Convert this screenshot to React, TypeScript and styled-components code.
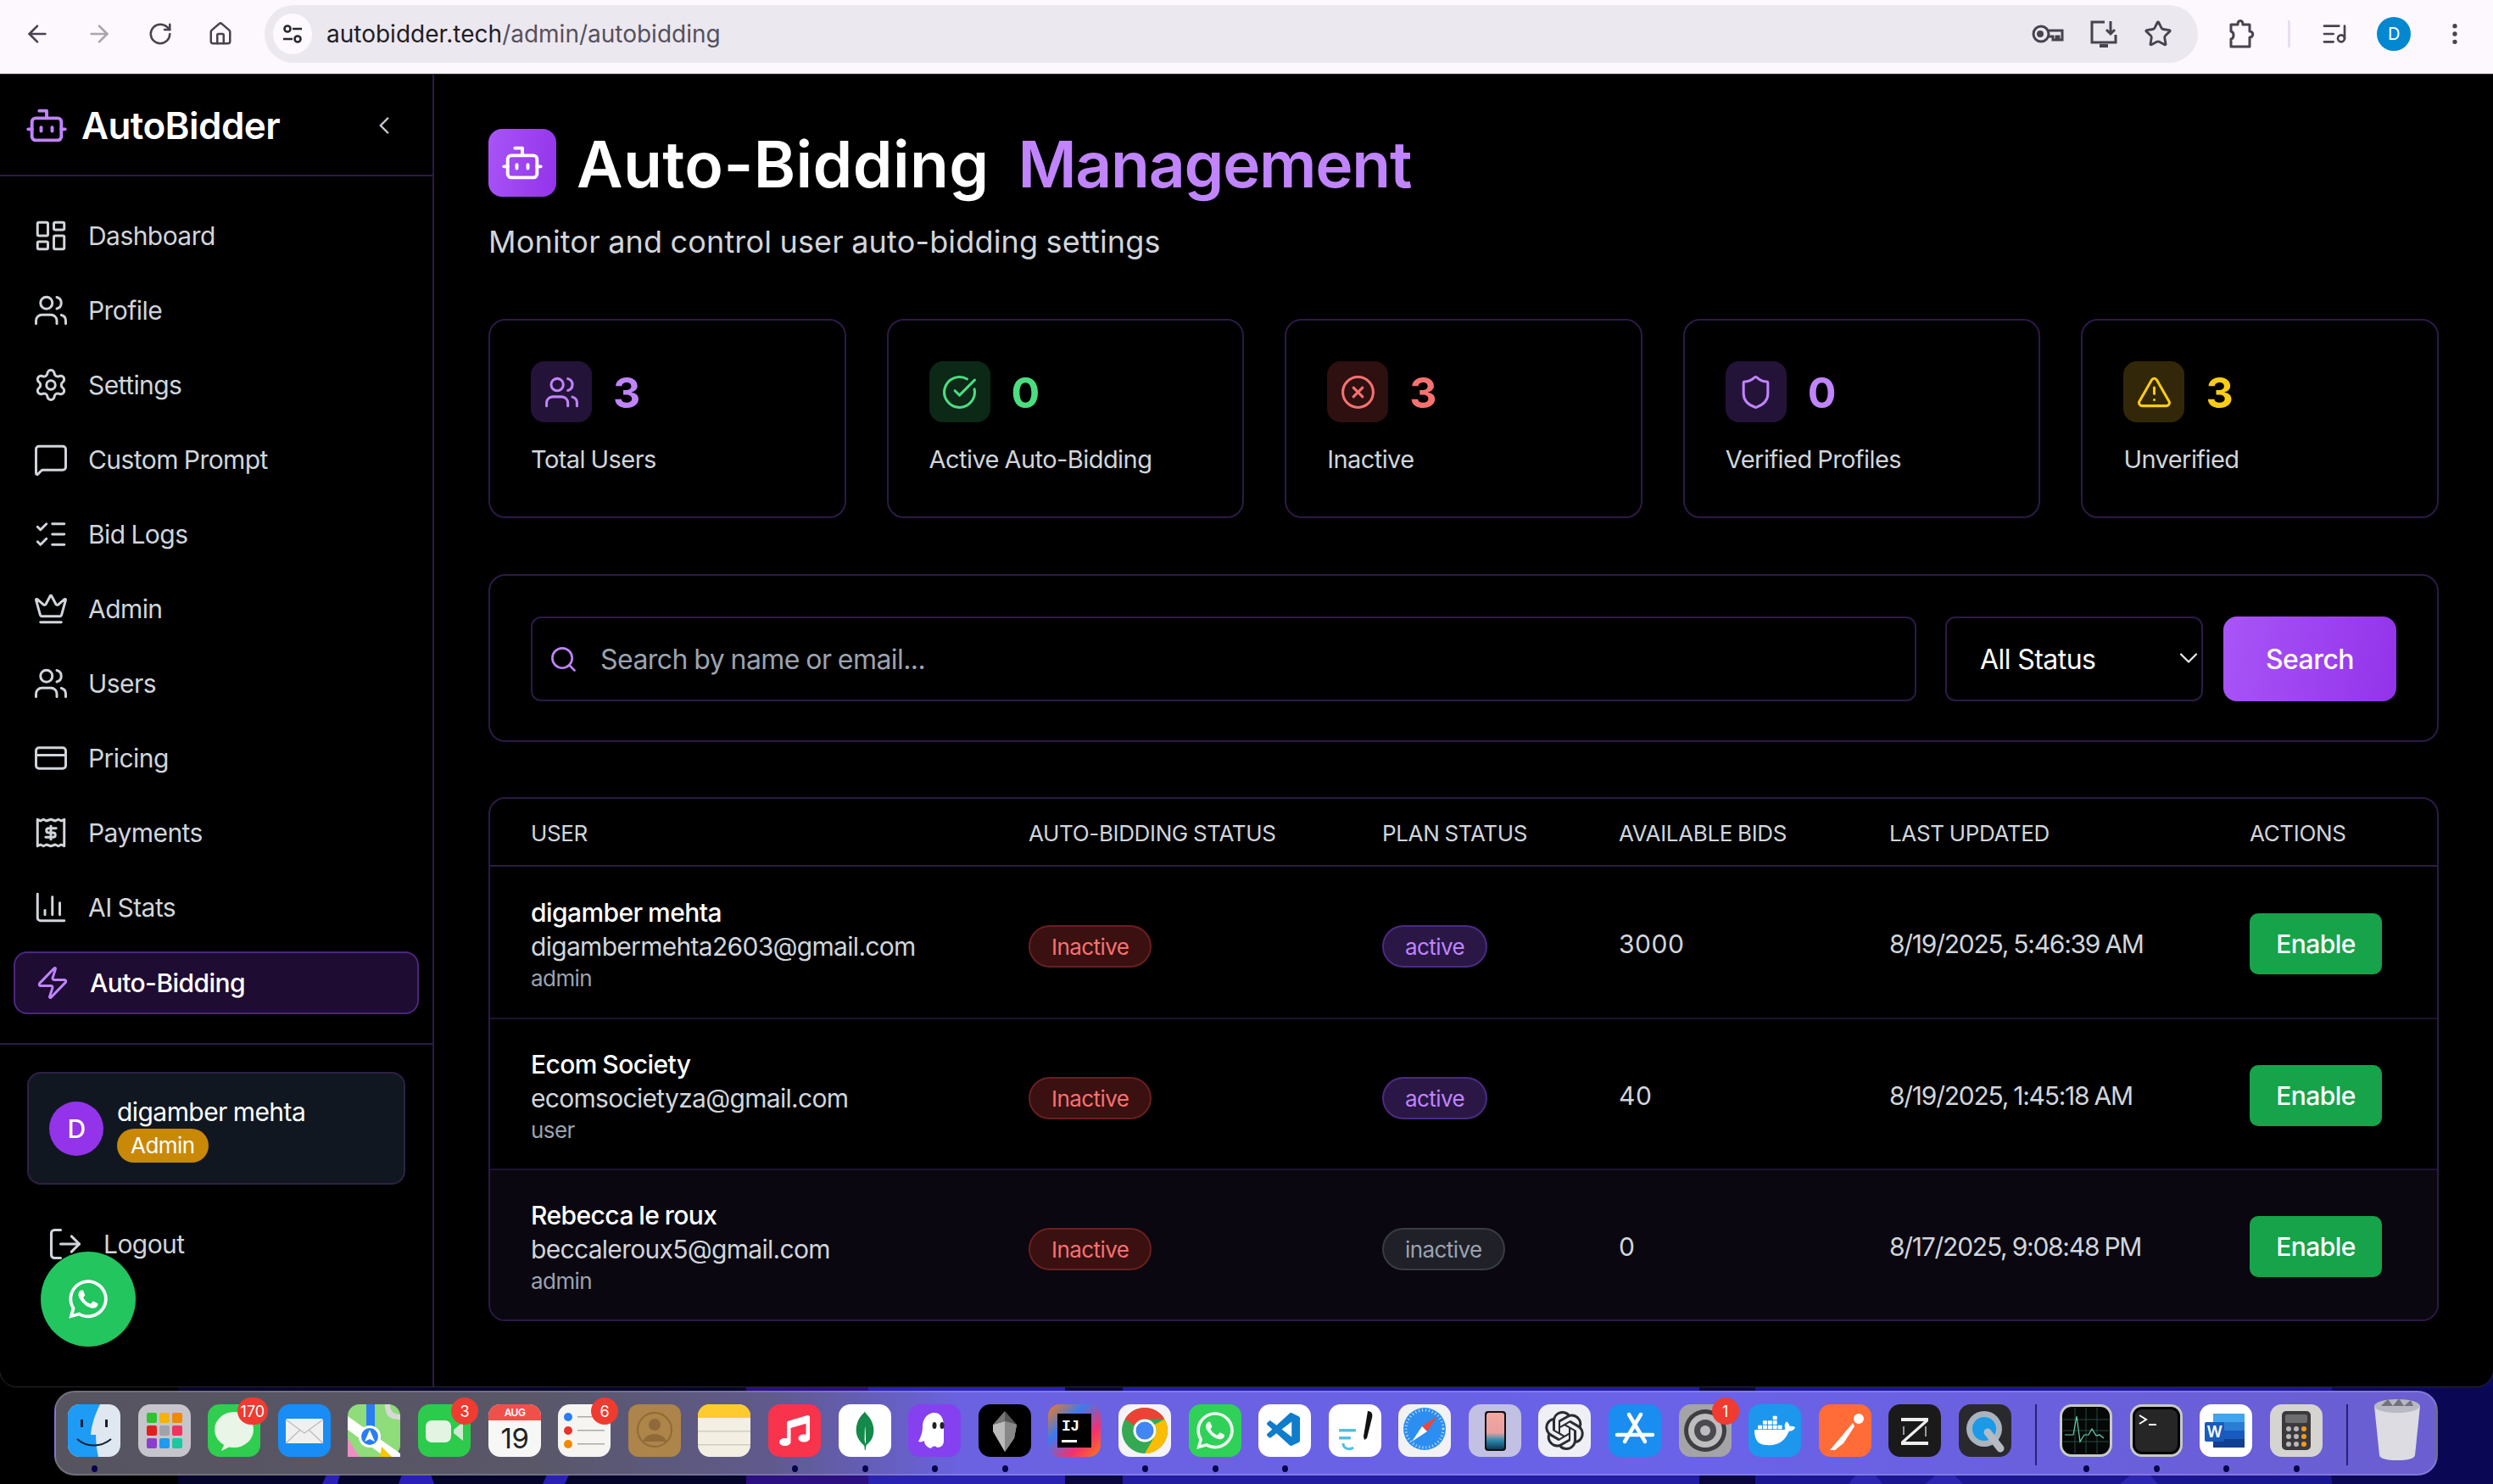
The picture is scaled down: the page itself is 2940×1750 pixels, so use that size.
import styled, { createGlobalStyle } from "styled-components";
import type { ReactNode } from "react";
import {
  ArrowLeft,
  ArrowRight,
  RotateCw,
  Home,
  Star,
  ListMusic,
  MoreVertical,
  Bot,
  ChevronLeft,
  ChevronDown,
  LayoutDashboard,
  Users,
  Settings,
  MessageSquare,
  ListChecks,
  Crown,
  CreditCard,
  ChartColumn,
  Zap,
  LogOut,
  CircleCheckBig,
  CircleX,
  Shield,
  TriangleAlert,
  Search as SearchIcon,
} from "lucide-react";
import { FaWhatsapp, FaMusic } from "react-icons/fa";
import { SiMongodb, SiOpenai, SiDocker } from "react-icons/si";
import { VscVscode } from "react-icons/vsc";

const GlobalStyle = createGlobalStyle`
  html, body {
    margin: 0;
    padding: 0;
    background: #000;
  }
  body {
    font-family: Inter, "Liberation Sans", sans-serif;
    letter-spacing: -0.56px;
    word-spacing: -1px;
  }
  * { box-sizing: border-box; }
`;

const Page = styled.div`
  position: relative;
  width: 2940px;
  height: 1750px;
  overflow: hidden;
  display: flex;
  flex-direction: column;
  background: linear-gradient(
    90deg,
    #000 0,
    #000 210px,
    #05052c 210px,
    #05052c 880px,
    #2c0f80 880px,
    #2c0f80 1024px,
    #2a22b0 1024px,
    #2a22b0 1256px,
    #0a0640 1256px,
    #0a0640 1324px,
    #221ca0 1324px,
    #221ca0 2004px,
    #0a0640 2004px,
    #0a0640 2070px,
    #1a1690 2070px,
    #1a1690 2750px,
    #0c0860 2750px
  );
`;

const Wallpaper = styled.svg`
  position: absolute;
  left: 0;
  bottom: 0;
  width: 2940px;
  height: 115px;
`;

const BrowserBar = styled.header`
  position: relative;
  height: 88px;
  flex: none;
  display: flex;
  align-items: center;
  background: #fdf7fe;
  border-bottom: 2px solid #e9e3ed;
  padding: 0 22px 6px 28px;
  color: #47434f;
`;

const NavButtons = styled.div`
  display: flex;
  align-items: center;
  gap: 41px;
  margin-right: 37px;
`;

const ToolGlyph = styled.span<{ $faded?: boolean }>`
  display: flex;
  color: ${(p) => (p.$faded ? "#a9a5ae" : "#47434f")};
`;

const UrlPill = styled.div`
  width: 2280px;
  height: 68px;
  border-radius: 34px;
  background: #ece8f0;
  display: flex;
  align-items: center;
  padding-left: 10px;
  padding-right: 30px;
`;

const TuneBadge = styled.span`
  width: 46px;
  height: 48px;
  border-radius: 50%;
  background: #fdf9ff;
  display: flex;
  align-items: center;
  justify-content: center;
  color: #2a2730;
`;

const UrlText = styled.div`
  margin-left: 17px;
  font-size: 28px;
  letter-spacing: 0;
  word-spacing: 0;
  color: #55515c;
  flex: 1;
`;

const UrlHost = styled.span`
  color: #1f1d24;
`;

const PillActions = styled.div`
  display: flex;
  align-items: center;
  gap: 30px;
`;

const BarActions = styled.div`
  display: flex;
  align-items: center;
  margin-left: 36px;
  flex: 1;
`;

const BarDivider = styled.span`
  width: 3px;
  height: 32px;
  background: #e6dff0;
  margin: 0 36px 0 38px;
`;

const ProfileDot = styled.span`
  width: 40px;
  height: 40px;
  border-radius: 50%;
  background: #0288d1;
  color: #fff;
  font-size: 20px;
  display: flex;
  align-items: center;
  justify-content: center;
  margin-left: 34px;
  margin-right: 36px;
`;

const AppWindow = styled.div`
  position: relative;
  height: 1547px;
  flex: none;
  display: flex;
  background: #000;
  border-radius: 0 0 20px 20px;
  box-shadow: 0 0 0 1px #26262c;
`;

const Sidebar = styled.aside`
  width: 512px;
  flex: none;
  border-right: 2px solid #2c1a47;
  display: flex;
  flex-direction: column;
`;

const SidebarHead = styled.div`
  height: 120px;
  flex: none;
  display: flex;
  align-items: center;
  padding: 2px 0 0 29px;
  border-bottom: 2px solid #2c1a47;
  color: #c084fc;
`;

const Brand = styled.div`
  margin-left: 15px;
  font-size: 44px;
  font-weight: 600;
  color: #fff;
  flex: 1;
`;

const Collapse = styled.span`
  display: flex;
  color: #c8cbd2;
  margin-right: 40px;
`;

const Nav = styled.nav`
  display: flex;
  flex-direction: column;
  gap: 16px;
  padding: 34px 16px 34px 16px;
  border-bottom: 2px solid #2c1a47;
`;

const NavItem = styled.a<{ $active?: boolean }>`
  height: ${(p) => (p.$active ? "74px" : "72px")};
  display: flex;
  align-items: center;
  gap: 23px;
  padding-left: 23px;
  border-radius: 16px;
  font-size: 30px;
  color: ${(p) => (p.$active ? "#fff" : "#d1d5db")};
  font-weight: ${(p) => (p.$active ? 500 : 400)};
  background: ${(p) => (p.$active ? "#1e0c33" : "transparent")};
  border: ${(p) => (p.$active ? "2px solid #4c2680" : "none")};
  svg {
    color: ${(p) => (p.$active ? "#c084fc" : "#d1d5db")};
  }
`;

const UserCard = styled.div`
  height: 133px;
  margin: 32px 32px 0 32px;
  background: #111720;
  border: 2px solid #2e2146;
  border-radius: 16px;
  display: flex;
  align-items: center;
  padding-left: 24px;
  gap: 16px;
`;

const Avatar = styled.div`
  width: 64px;
  height: 64px;
  border-radius: 50%;
  background: #9333ea;
  color: #fff;
  font-size: 30px;
  font-weight: 500;
  display: flex;
  align-items: center;
  justify-content: center;
`;

const UserName = styled.div`
  font-size: 30px;
  font-weight: 400;
  color: #fff;
  line-height: 40px;
`;

const RolePill = styled.span`
  display: inline-flex;
  align-items: center;
  height: 40px;
  padding: 0 16px;
  border-radius: 20px;
  background: #c98906;
  color: #fff;
  font-size: 26px;
`;

const LogoutRow = styled.a`
  display: flex;
  align-items: center;
  gap: 23px;
  margin-top: 48px;
  padding-left: 55px;
  height: 44px;
  font-size: 30px;
  color: #d1d5db;
`;

const WhatsappFab = styled.div`
  position: absolute;
  left: 48px;
  top: 1476px;
  width: 112px;
  height: 112px;
  border-radius: 50%;
  background: #22c55e;
  color: #fff;
  display: flex;
  align-items: center;
  justify-content: center;
`;

const Main = styled.main`
  flex: 1;
  padding: 64px 64px 0;
  min-width: 0;
`;

const TitleRow = styled.div`
  display: flex;
  align-items: center;
  height: 80px;
`;

const TitleIcon = styled.div`
  width: 80px;
  height: 80px;
  border-radius: 16px;
  background: linear-gradient(100deg, #a855f7, #9333ea);
  color: #fff;
  display: flex;
  align-items: center;
  justify-content: center;
  margin-right: 24px;
`;

const Title = styled.h1`
  margin: 4px 0 0;
  font-size: 75px;
  font-weight: 600;
  line-height: 80px;
  letter-spacing: 0.38px;
  color: #fff;
  display: flex;
  gap: 34px;
`;

const TitleAccent = styled.span`
  color: #c084fc;
  letter-spacing: -1.31px;
`;

const Subtitle = styled.p`
  margin: 26px 0 64px;
  font-size: 36px;
  line-height: 54px;
  letter-spacing: 0.17px;
  color: #d1d5db;
`;

const StatGrid = styled.section`
  display: grid;
  grid-template-columns: repeat(5, 1fr);
  gap: 48px;
  margin-bottom: 66px;
`;

const StatCard = styled.div`
  height: 235px;
  border: 2px solid #2c1a47;
  border-radius: 20px;
  padding: 48px;
`;

const StatTop = styled.div`
  display: flex;
  align-items: center;
  gap: 25px;
`;

const StatIcon = styled.div<{ $bg: string; $fg: string }>`
  width: 72px;
  height: 72px;
  border-radius: 16px;
  background: ${(p) => p.$bg};
  color: ${(p) => p.$fg};
  display: flex;
  align-items: center;
  justify-content: center;
`;

const StatValue = styled.div<{ $fg: string }>`
  margin-top: 2px;
  font-size: 50px;
  font-weight: 700;
  color: ${(p) => p.$fg};
`;

const StatLabel = styled.div`
  margin-top: 22px;
  font-size: 29px;
  line-height: 44px;
  color: #d1d5db;
`;

const FilterPanel = styled.section`
  height: 198px;
  border: 2px solid #2c1a47;
  border-radius: 20px;
  padding: 48px;
  display: flex;
  gap: 24px;
  margin-bottom: 65px;
`;

const SearchField = styled.label`
  flex: none;
  width: 1634px;
  margin-right: 10px;
  height: 100px;
  border: 2px solid #2c1a47;
  border-radius: 12px;
  display: flex;
  align-items: center;
  padding-left: 19px;
  gap: 26px;
  color: #c084fc;
`;

const SearchInput = styled.input`
  flex: 1;
  background: transparent;
  border: 0;
  outline: 0;
  padding: 0;
  font-family: inherit;
  letter-spacing: inherit;
  word-spacing: inherit;
  font-size: 32px;
  color: #fff;
  &::placeholder {
    color: #9ca3af;
    opacity: 1;
  }
`;

const SelectWrap = styled.div`
  position: relative;
  width: 304px;
  height: 100px;
  flex: none;
  color: #e5e7eb;
  svg {
    position: absolute;
    right: -1px;
    top: 31px;
    pointer-events: none;
  }
`;

const StatusSelect = styled.select`
  width: 100%;
  height: 100%;
  appearance: none;
  background: #000;
  border: 2px solid #2c1a47;
  border-radius: 12px;
  color: #fff;
  font-family: inherit;
  letter-spacing: inherit;
  font-size: 32px;
  padding-left: 39px;
`;

const SearchButton = styled.button`
  width: 204px;
  height: 100px;
  flex: none;
  border: 0;
  border-radius: 16px;
  background: linear-gradient(100deg, #a855f7, #9333ea);
  color: #fff;
  font-family: inherit;
  font-size: 32px;
  font-weight: 500;
  letter-spacing: inherit;
`;

const TableCard = styled.section`
  border: 2px solid #2c1a47;
  border-radius: 20px;
  overflow: hidden;
`;

const Columns = "587px 417px 279px 319px 425px 1fr";

const HeadRow = styled.div`
  height: 80px;
  display: grid;
  grid-template-columns: ${Columns};
  align-items: center;
  padding: 2px 0 0 48px;
  border-bottom: 2px solid #2c1a47;
  font-size: 26px;
  font-weight: 400;
  letter-spacing: -0.35px;
  text-transform: uppercase;
  color: #d1d5db;
`;

const BodyRow = styled.div<{ $tinted?: boolean }>`
  height: 178px;
  display: grid;
  grid-template-columns: ${Columns};
  align-items: center;
  padding-left: 48px;
  background: ${(p) => (p.$tinted ? "#0a0710" : "transparent")};
  & + & {
    border-top: 2px solid #1e1230;
  }
`;

const UserCell = styled.div`
  display: flex;
  flex-direction: column;
  padding-top: 6px;
`;

const Name = styled.div`
  font-size: 30px;
  font-weight: 500;
  color: #fff;
  line-height: 40px;
`;

const Email = styled.div`
  font-size: 30px;
  letter-spacing: -0.7px;
  color: #d1d5db;
  line-height: 40px;
`;

const Role = styled.div`
  font-size: 26px;
  color: #9ca3af;
  line-height: 36px;
`;

const badgeTones = {
  red: { bg: "#3a1010", line: "#6b1f1f", fg: "#f87171" },
  purple: { bg: "#2a1745", line: "#4c2a85", fg: "#c084fc" },
  grey: { bg: "#1f2028", line: "#3a3b44", fg: "#9ca3af" },
};

const Badge = styled.span<{ $tone: keyof typeof badgeTones }>`
  justify-self: start;
  height: 50px;
  margin-top: 10px;
  padding: 0 25px;
  display: inline-flex;
  align-items: center;
  border-radius: 25px;
  font-size: 26px;
  font-weight: 400;
  background: ${(p) => badgeTones[p.$tone].bg};
  border: 2px solid ${(p) => badgeTones[p.$tone].line};
  color: ${(p) => badgeTones[p.$tone].fg};
`;

const BidsText = styled.div`
  margin-top: 4px;
  font-size: 30px;
  letter-spacing: 0.5px;
  color: #d1d5db;
`;

const DateText = styled.div`
  margin-top: 4px;
  font-size: 30px;
  letter-spacing: -1.25px;
  color: #d1d5db;
`;

const EnableButton = styled.button`
  width: 156px;
  height: 72px;
  margin-top: 4px;
  border: 0;
  border-radius: 10px;
  background: #16a34a;
  color: #fff;
  font-family: inherit;
  font-size: 30px;
  font-weight: 500;
  letter-spacing: inherit;
`;

const Dock = styled.footer`
  position: relative;
  height: 100px;
  margin: 5px 65px 0 64px;
  flex: none;
  display: flex;
  align-items: flex-start;
  gap: 20.6px;
  padding: 14px 0 0 14px;
  border: 2px solid rgba(255, 255, 255, 0.16);
  border-radius: 24px;
  background: linear-gradient(90deg, #56545f 0%, #595768 20%, #5f5a8c 30%, #6a62e0 38%, #6a62e8 70%, #6a5ed0 100%);
`;

const DockItem = styled.div`
  position: relative;
  width: 62px;
  height: 62px;
  flex: none;
  svg {
    display: block;
  }
`;

const RunningDot = styled.span`
  position: absolute;
  left: 28px;
  top: 72px;
  width: 7px;
  height: 8px;
  border-radius: 50%;
  background: #05054a;
`;

const DockBadge = styled.span`
  position: absolute;
  top: -8px;
  right: -9px;
  min-width: 32px;
  height: 32px;
  padding: 0 4px;
  border-radius: 16px;
  background: #ef3b30;
  color: #fff;
  font-size: 18px;
  letter-spacing: 0;
  display: flex;
  align-items: center;
  justify-content: center;
`;

const DockSeparator = styled.span`
  width: 2px;
  height: 72px;
  flex: none;
  margin: 0 7px;
  background: rgba(20, 10, 90, 0.75);
`;

const GlyphBox = styled.div`
  width: 62px;
  height: 62px;
  display: flex;
  align-items: center;
  justify-content: center;
`;

const Tile = ({ children, bg, rx = 14 }: { children?: ReactNode; bg: string; rx?: number }) => (
  <svg width="62" height="62" viewBox="0 0 62 62">
    <rect width="62" height="62" rx={rx} fill={bg} />
    {children}
  </svg>
);

const Glyph = ({ children }: { children: ReactNode }) => (
  <foreignObject x="0" y="0" width="62" height="62">
    <GlyphBox>{children}</GlyphBox>
  </foreignObject>
);

// chrome toolbar glyphs, lucide's are too far off these
const TuneGlyph = () => (
  <svg width="28" height="28" viewBox="0 0 28 28" fill="none" stroke="currentColor" strokeWidth="2.6">
    <circle cx="8" cy="8" r="3.5" />
    <path d="M14 8h11M3 20h11" />
    <circle cx="20" cy="20" r="3.5" />
  </svg>
);

const KeyGlyph = () => (
  <svg width="38" height="24" viewBox="0 0 38 24" fill="none" stroke="currentColor" strokeWidth="3">
    <circle cx="11" cy="12" r="9" />
    <circle cx="10" cy="12" r="2.5" fill="currentColor" />
    <path d="M20 8h16v11h-4v-4h-3v4h-4v-4h-5" />
  </svg>
);

const InstallGlyph = () => (
  <svg width="34" height="34" viewBox="0 0 34 34" fill="none" stroke="currentColor" strokeWidth="3">
    <path d="M18 3H3v24h28V18" />
    <path d="M12 31h10" strokeWidth="4" />
    <path d="M25 2v15M20 12l5 5 5-5" />
  </svg>
);

const PuzzleGlyph = () => (
  <svg width="32" height="36" viewBox="0 0 32 36" fill="none" stroke="currentColor" strokeWidth="3" strokeLinejoin="round">
    <path d="M3 7h8c0-6 6-6 6 0h8v8c5 0 5 7 0 7v11H3V24c4-1 4-8 0-9z" />
  </svg>
);

const ReceiptDollar = ({ size = 36, strokeWidth = 1.8 }: { size?: number; strokeWidth?: number }) => (
  <svg width={size} height={size} viewBox="0 0 24 24" fill="none" stroke="currentColor" strokeWidth={strokeWidth} strokeLinejoin="round" strokeLinecap="round">
    <path d="M3 3l2 1 2-1 2 1 3-1 3 1 2-1 2 1 2-1v18l-2-1-2 1-2-1-3 1-3-1-2 1-2-1-2 1z" />
    <path d="M15.5 9h-5a1.5 1.5 0 0 0 0 3h3a1.5 1.5 0 0 1 0 3h-5M12 7.5v9" />
  </svg>
);

const dockIcons: { key: string; draw: ReactNode; dot?: boolean; badge?: string }[] = [
  {
    key: "finder",
    dot: true,
    draw: (
      <svg width="62" height="62" viewBox="0 0 62 62">
        <rect width="62" height="62" rx="14" fill="#dfe7f0" />
        <path d="M14 0h24c-6 12-10 24-11 36h6c0 8 1 18 3 26H14A14 14 0 0 1 0 48V14A14 14 0 0 1 14 0z" fill="#1e9bf5" />
        <rect x="15" y="18" width="3" height="9" fill="#123" />
        <rect x="44" y="18" width="3" height="9" fill="#123" />
        <path d="M11 41c11 10 28 10 40 0" stroke="#123" strokeWidth="2" fill="none" />
      </svg>
    ),
  },
  {
    key: "launchpad",
    draw: (
      <Tile bg="#c6c5cc">
        {["#2fc42f", "#f5b400", "#f08a00", "#e0201a", "#9ea4a8", "#ee3560", "#8a3fd0", "#1c9bf0", "#1cc8a0"].map((c, i) => (
          <rect key={c} x={10 + (i % 3) * 15} y={10 + Math.floor(i / 3) * 15} width="12" height="12" rx="2" fill={c} />
        ))}
      </Tile>
    ),
  },
  {
    key: "messages",
    badge: "170",
    draw: (
      <Tile bg="#2fce4f">
        <ellipse cx="31" cy="30" rx="23" ry="21" fill="#e9f5e6" />
        <path d="M20 46l-4 9 12-6z" fill="#e9f5e6" />
      </Tile>
    ),
  },
  {
    key: "mail",
    draw: (
      <Tile bg="#1a8cf5">
        <rect x="9" y="17" width="44" height="29" rx="2" fill="#f0f0f0" />
        <path d="M9 18l22 16 22-16M9 46l17-16M53 46L36 30" stroke="#bbb" strokeWidth="1.2" fill="none" />
      </Tile>
    ),
  },
  {
    key: "maps",
    draw: (
      <Tile bg="#8fdc7a">
        <path d="M0 14L62 58V62H44L0 30z" fill="#fff" />
        <rect x="22" y="0" width="10" height="32" fill="#2a7df5" />
        <path d="M44 0c0 14 6 18 18 18v-6c-8 0-12-4-12-12z" fill="#d8d8d8" />
        <path d="M0 40l14 22H0z" fill="#ee8fc4" />
        <path d="M40 50l12 12H38z" fill="#f5c800" />
        <circle cx="26" cy="38" r="13" fill="#fff" />
        <circle cx="26" cy="38" r="10" fill="#2a7df5" />
        <path d="M26 30l6 14-6-3-6 3z" fill="#fff" />
      </Tile>
    ),
  },
  {
    key: "facetime",
    badge: "3",
    draw: (
      <Tile bg="#2ccb4c">
        <rect x="9" y="19" width="30" height="26" rx="7" fill="#e4f4e2" />
        <path d="M42 30l11-9v22l-11-9z" fill="#cfead0" />
      </Tile>
    ),
  },
  {
    key: "calendar",
    draw: (
      <Tile bg="#f7f7f5">
        <path d="M14 0h34a14 14 0 0 1 14 14v5H0v-5A14 14 0 0 1 14 0z" fill="#f0504a" />
        <text x="31" y="14" textAnchor="middle" fontSize="12" fontWeight="600" fill="#fff" fontFamily="Inter">AUG</text>
        <text x="31" y="52" textAnchor="middle" fontSize="33" fill="#222" fontFamily="Inter">19</text>
      </Tile>
    ),
  },
  {
    key: "reminders",
    badge: "6",
    draw: (
      <Tile bg="#f6f5f1">
        {["#2a7df5", "#e8342a", "#f08a00"].map((c, i) => (
          <g key={c}>
            <circle cx="12" cy={15 + i * 16} r="5" fill={c} />
            <rect x="23" y={14 + i * 16} width="32" height="1.5" fill="#aaa" />
          </g>
        ))}
      </Tile>
    ),
  },
  {
    key: "contacts",
    draw: (
      <Tile bg="#ad8449" rx={12}>
        <circle cx="31" cy="30" r="20" fill="none" stroke="#8f6a38" strokeWidth="2" />
        <circle cx="31" cy="24" r="7" fill="#8f6a38" />
        <path d="M17 44c4-12 24-12 28 0z" fill="#8f6a38" />
      </Tile>
    ),
  },
  {
    key: "notes",
    draw: (
      <Tile bg="#f3efe2">
        <path d="M14 0h34a14 14 0 0 1 14 14v2H0v-2A14 14 0 0 1 14 0z" fill="#fdcb2e" />
        <rect x="0" y="31" width="62" height="1.5" fill="#cfccc2" />
        <rect x="0" y="47" width="62" height="1.5" fill="#cfccc2" />
      </Tile>
    ),
  },
  {
    key: "music",
    dot: true,
    draw: (
      <Tile bg="#f8344c">
        <Glyph>
          <FaMusic size={36} color="#fff" />
        </Glyph>
      </Tile>
    ),
  },
  {
    key: "mongodb",
    dot: true,
    draw: (
      <Tile bg="#fff">
        <Glyph>
          <SiMongodb size={46} color="#138a4a" />
        </Glyph>
      </Tile>
    ),
  },
  {
    key: "ghost",
    dot: true,
    draw: (
      <Tile bg="#8540f0">
        <path d="M31 10c-9 0-14 8-14 16 0 8-3 14-5 18 3 1 5 0 7-1 0 5 4 8 8 9 2-3 5-3 7-1 5 0 8-3 8-8V26c0-10-4-16-11-16z" fill="#fff" />
        <ellipse cx="31" cy="25" rx="2.5" ry="4" fill="#222" />
        <ellipse cx="40" cy="25" rx="2.5" ry="4" fill="#222" />
      </Tile>
    ),
  },
  {
    key: "crystal",
    dot: true,
    draw: (
      <Tile bg="#000">
        <path d="M31 8L17 24l14-4z" fill="#777" />
        <path d="M31 8l14 16-14-4z" fill="#555" />
        <path d="M17 24l14-4 14 4-3 16-11 16-14-24z" fill="#bbb" />
        <path d="M31 20l14 4-3 16-11 16z" fill="#888" />
      </Tile>
    ),
  },
  {
    key: "intellij",
    draw: (
      <svg width="62" height="62" viewBox="0 0 62 62">
        <defs>
          <linearGradient id="ij" x1="0" y1="0" x2="1" y2="1">
            <stop offset="0" stopColor="#f97a12" />
            <stop offset="0.35" stopColor="#3b7bf0" />
            <stop offset="0.7" stopColor="#f5306e" />
            <stop offset="1" stopColor="#f97a12" />
          </linearGradient>
        </defs>
        <rect width="62" height="62" rx="14" fill="url(#ij)" />
        <rect x="11" y="11" width="40" height="40" fill="#000" />
        <text x="16" y="31" fontSize="18" fontWeight="700" fill="#fff" fontFamily="Liberation Mono">IJ</text>
        <rect x="16" y="42" width="18" height="3" fill="#fff" />
      </svg>
    ),
  },
  {
    key: "chrome",
    dot: true,
    draw: (
      <Tile bg="#f5f3f8">
        <circle cx="31" cy="31" r="27" fill="#34a853" />
        <path d="M31 4a27 27 0 0 1 23.4 13.5H31a13.5 13.5 0 0 0-12 7.5L7.6 17.5A27 27 0 0 1 31 4z" fill="#ea4335" />
        <path d="M54.4 17.5A27 27 0 0 1 31 58l11.7-20.2A13.5 13.5 0 0 0 42.7 24z" fill="#fbbc04" />
        <circle cx="31" cy="31" r="13.5" fill="#fff" />
        <circle cx="31" cy="31" r="10.5" fill="#4285f4" />
      </Tile>
    ),
  },
  {
    key: "whatsapp",
    dot: true,
    draw: (
      <Tile bg="#2fd158">
        <Glyph>
          <FaWhatsapp size={50} color="#f0fbf0" />
        </Glyph>
      </Tile>
    ),
  },
  {
    key: "vscode",
    dot: true,
    draw: (
      <Tile bg="#fff">
        <Glyph>
          <VscVscode size={48} color="#0f7ccc" />
        </Glyph>
      </Tile>
    ),
  },
  {
    key: "freeform",
    draw: (
      <Tile bg="#fff">
        <rect x="12" y="29" width="20" height="3.5" rx="1" fill="#52c0dd" />
        <rect x="12" y="38" width="14" height="3.5" rx="1" fill="#52c0dd" />
        <path d="M17 46c0 7 8 8 12 5" stroke="#52c0dd" strokeWidth="3" fill="none" />
        <path d="M46 8c5 0 6 4 5 8l-6 24-3 2-1-4z" fill="#111" />
      </Tile>
    ),
  },
  {
    key: "safari",
    draw: (
      <Tile bg="#f2f2f2">
        <circle cx="31" cy="29" r="25" fill="#2c8ef0" />
        <circle cx="31" cy="29" r="22" fill="none" stroke="#d5e9fc" strokeWidth="3" strokeDasharray="1 3" />
        <path d="M46 14L28 26l6 6z" fill="#f0453a" />
        <path d="M16 44l12-18 6 6z" fill="#fff" />
      </Tile>
    ),
  },
  {
    key: "iphone",
    draw: (
      <svg width="62" height="62" viewBox="0 0 62 62">
        <defs>
          <linearGradient id="ph" x1="0" y1="0" x2="0" y2="1">
            <stop offset="0" stopColor="#f2a79f" />
            <stop offset="0.55" stopColor="#e8a0a0" />
            <stop offset="0.75" stopColor="#2d8ab0" />
            <stop offset="1" stopColor="#0c3a55" />
          </linearGradient>
        </defs>
        <rect width="62" height="62" rx="14" fill="#c3c1e3" />
        <rect x="19" y="8" width="25" height="47" rx="4" fill="#111" />
        <rect x="21" y="10" width="21" height="43" rx="3" fill="url(#ph)" />
      </svg>
    ),
  },
  {
    key: "chatgpt",
    draw: (
      <Tile bg="#eef0f5">
        <Glyph>
          <SiOpenai size={46} color="#2b2b33" />
        </Glyph>
      </Tile>
    ),
  },
  {
    key: "appstore",
    draw: (
      <Tile bg="#1a8df0">
        <path d="M24 12l19 32M38 12L19 44M10 36h42" stroke="#fff" strokeWidth="4.5" strokeLinecap="round" fill="none" />
      </Tile>
    ),
  },
  {
    key: "settings",
    badge: "1",
    draw: (
      <Tile bg="#a4a4a6">
        <circle cx="31" cy="31" r="25" fill="#3d3d42" />
        <circle cx="31" cy="31" r="20" fill="#bdbdc0" />
        <circle cx="31" cy="31" r="13" fill="#4a4a50" />
        <circle cx="31" cy="31" r="6" fill="#bdbdc0" />
      </Tile>
    ),
  },
  {
    key: "docker",
    draw: (
      <Tile bg="#1d97ee">
        <Glyph>
          <SiDocker size={48} color="#fff" />
        </Glyph>
      </Tile>
    ),
  },
  {
    key: "postman",
    draw: (
      <Tile bg="#ff6c37">
        <circle cx="47" cy="17" r="6" fill="#fff" />
        <path d="M40 22L13 54h6l10-8 13-20z" fill="#fff" />
      </Tile>
    ),
  },
  {
    key: "zed",
    draw: (
      <Tile bg="#1a1a1a">
        <path d="M15 16h32v4L20 44h27v4H15v-4l27-24H15z" fill="#eee" />
        <path d="M18 26v10M44 26v12" stroke="#999" strokeWidth="2" />
      </Tile>
    ),
  },
  {
    key: "quicktime",
    draw: (
      <Tile bg="#2a2a2e">
        <circle cx="30" cy="29" r="21" fill="#a9b4bf" />
        <circle cx="30" cy="29" r="14" fill="#1a9ae8" />
        <path d="M34 33l15 19" stroke="#b5bcc4" strokeWidth="9" strokeLinecap="round" />
      </Tile>
    ),
  },
  { key: "sep1", draw: null },
  {
    key: "activity",
    dot: true,
    draw: (
      <Tile bg="#c8cac4">
        <rect x="3" y="3" width="56" height="56" rx="11" fill="#050806" />
        <path d="M18 4v54M31 4v54M44 4v54M4 18h54M4 31h54M4 44h54" stroke="#25483e" strokeWidth="1" />
        <path d="M6 36h10l4-22 4 30 5-8 5 0 4-7 5 8 4-1 5 4" stroke="#66d4b0" strokeWidth="1.2" fill="none" />
      </Tile>
    ),
  },
  {
    key: "terminal",
    dot: true,
    draw: (
      <Tile bg="#c8cac4">
        <rect x="3" y="3" width="56" height="56" rx="11" fill="#000" />
        <rect x="6" y="6" width="50" height="50" rx="8" fill="#262626" />
        <path d="M11 13l8 5-8 5" stroke="#fff" strokeWidth="2" fill="none" />
        <rect x="22" y="23" width="9" height="2" fill="#fff" />
      </Tile>
    ),
  },
  {
    key: "word",
    dot: true,
    draw: (
      <Tile bg="#fff">
        <rect x="16" y="11" width="37" height="10" fill="#41a5ee" />
        <rect x="16" y="21" width="37" height="10" fill="#2b7cd3" />
        <rect x="16" y="31" width="37" height="10" fill="#185abd" />
        <rect x="16" y="41" width="37" height="10" fill="#103f91" />
        <rect x="6" y="21" width="23" height="23" rx="2" fill="#185abd" />
        <text x="17.5" y="39" textAnchor="middle" fontSize="18" fontWeight="600" fill="#fff" fontFamily="Inter">W</text>
      </Tile>
    ),
  },
  {
    key: "calculator",
    dot: true,
    draw: (
      <Tile bg="#d6d4d0">
        <rect x="14" y="8" width="34" height="46" rx="5" fill="#3a3a3c" />
        <rect x="18" y="12" width="26" height="10" rx="2" fill="#6d6d70" />
        {[0, 1, 2].map((row) =>
          [0, 1, 2].map((col) => (
            <circle key={`${row}${col}`} cx={22 + col * 9} cy={29 + row * 9} r="3" fill={col === 2 ? "#f39a1c" : "#b8b8ba"} />
          )),
        )}
      </Tile>
    ),
  },
  { key: "sep2", draw: null },
  {
    key: "trash",
    draw: (
      <svg width="62" height="76" viewBox="0 0 62 76" style={{ marginTop: -8 }}>
        <path d="M4 10l6 58c1 4 8 6 21 6s20-2 21-6l6-58z" fill="#dcdce2" />
        <ellipse cx="31" cy="10" rx="27" ry="8" fill="#b9b9c4" />
        <path d="M12 10l8-8 6 8 7-9 6 9 8-7 3 7z" fill="#73727c" />
      </svg>
    ),
  },
];

const navItems = [
  { label: "Dashboard", Icon: LayoutDashboard },
  { label: "Profile", Icon: Users },
  { label: "Settings", Icon: Settings },
  { label: "Custom Prompt", Icon: MessageSquare },
  { label: "Bid Logs", Icon: ListChecks },
  { label: "Admin", Icon: Crown },
  { label: "Users", Icon: Users },
  { label: "Pricing", Icon: CreditCard },
  { label: "Payments", Icon: ReceiptDollar },
  { label: "AI Stats", Icon: ChartColumn },
];

const stats = [
  { label: "Total Users", value: "3", Icon: Users, bg: "#241338", fg: "#c084fc" },
  { label: "Active Auto-Bidding", value: "0", Icon: CircleCheckBig, bg: "#0c2817", fg: "#4ade80" },
  { label: "Inactive", value: "3", Icon: CircleX, bg: "#2e1010", fg: "#f87171" },
  { label: "Verified Profiles", value: "0", Icon: Shield, bg: "#241338", fg: "#c084fc" },
  { label: "Unverified", value: "3", Icon: TriangleAlert, bg: "#33270a", fg: "#facc15" },
];

const rows = [
  { name: "digamber mehta", email: "digambermehta2603@gmail.com", role: "admin", plan: "active", bids: "3000", updated: "8/19/2025, 5:46:39 AM" },
  { name: "Ecom Society", email: "ecomsocietyza@gmail.com", role: "user", plan: "active", bids: "40", updated: "8/19/2025, 1:45:18 AM" },
  { name: "Rebecca le roux", email: "beccaleroux5@gmail.com", role: "admin", plan: "inactive", bids: "0", updated: "8/17/2025, 9:08:48 PM" },
];

function App() {
  return (
    <Page>
      <GlobalStyle />
      <Wallpaper viewBox="0 0 2940 115">
        <path d="M380 115l14-30 12 0-8 30zM470 115l14-40 14 0 14 40zM640 115l14-30 26 0-14 30z" fill="#2a20b8" />
        <path d="M2180 115l20-25 20 25zM2270 115l25-20 20 20zM2500 115l25-22 20 22z" fill="#2c26b0" />
        <path d="M2740 20c80 0 120-10 200-40v135H2750z" fill="#0a0850" opacity="0.7" />
      </Wallpaper>

      <BrowserBar>
        <NavButtons>
          <ToolGlyph><ArrowLeft size={32} /></ToolGlyph>
          <ToolGlyph $faded><ArrowRight size={32} /></ToolGlyph>
          <ToolGlyph><RotateCw size={30} /></ToolGlyph>
          <ToolGlyph><Home size={30} /></ToolGlyph>
        </NavButtons>
        <UrlPill>
          <TuneBadge><TuneGlyph /></TuneBadge>
          <UrlText><UrlHost>autobidder.tech</UrlHost>/admin/autobidding</UrlText>
          <PillActions>
            <ToolGlyph><KeyGlyph /></ToolGlyph>
            <ToolGlyph><InstallGlyph /></ToolGlyph>
            <ToolGlyph><Star size={34} /></ToolGlyph>
          </PillActions>
        </UrlPill>
        <BarActions>
          <ToolGlyph><PuzzleGlyph /></ToolGlyph>
          <BarDivider />
          <ToolGlyph><ListMusic size={32} /></ToolGlyph>
          <ProfileDot>D</ProfileDot>
          <ToolGlyph><MoreVertical size={32} /></ToolGlyph>
        </BarActions>
      </BrowserBar>

      <AppWindow>
        <Sidebar>
          <SidebarHead>
            <Bot size={52} strokeWidth={1.8} />
            <Brand>AutoBidder</Brand>
            <Collapse><ChevronLeft size={34} strokeWidth={1.7} /></Collapse>
          </SidebarHead>
          <Nav>
            {navItems.map(({ label, Icon }) => (
              <NavItem key={label}>
                <Icon size={42} strokeWidth={1.7} />
                {label}
              </NavItem>
            ))}
            <NavItem $active>
              <Zap size={42} strokeWidth={1.7} />
              Auto-Bidding
            </NavItem>
          </Nav>
          <UserCard>
            <Avatar>D</Avatar>
            <div>
              <UserName>digamber mehta</UserName>
              <RolePill>Admin</RolePill>
            </div>
          </UserCard>
          <LogoutRow>
            <LogOut size={44} strokeWidth={1.7} />
            Logout
          </LogoutRow>
        </Sidebar>

        <Main>
          <TitleRow>
            <TitleIcon><Bot size={52} strokeWidth={1.8} /></TitleIcon>
            <Title>
              Auto-Bidding
              <TitleAccent>Management</TitleAccent>
            </Title>
          </TitleRow>
          <Subtitle>Monitor and control user auto-bidding settings</Subtitle>

          <StatGrid>
            {stats.map(({ label, value, Icon, bg, fg }) => (
              <StatCard key={label}>
                <StatTop>
                  <StatIcon $bg={bg} $fg={fg}><Icon size={43} strokeWidth={1.7} /></StatIcon>
                  <StatValue $fg={fg}>{value}</StatValue>
                </StatTop>
                <StatLabel>{label}</StatLabel>
              </StatCard>
            ))}
          </StatGrid>

          <FilterPanel>
            <SearchField>
              <SearchIcon size={35} strokeWidth={1.8} />
              <SearchInput placeholder="Search by name or email..." />
            </SearchField>
            <SelectWrap>
              <StatusSelect defaultValue="all">
                <option value="all">All Status</option>
                <option value="active">Active</option>
                <option value="inactive">Inactive</option>
              </StatusSelect>
              <ChevronDown size={36} strokeWidth={1.5} />
            </SelectWrap>
            <SearchButton>Search</SearchButton>
          </FilterPanel>

          <TableCard>
            <HeadRow>
              <div>User</div>
              <div>Auto-Bidding Status</div>
              <div>Plan Status</div>
              <div>Available Bids</div>
              <div>Last Updated</div>
              <div>Actions</div>
            </HeadRow>
            {rows.map((row, i) => (
              <BodyRow key={row.email} $tinted={i === 2}>
                <UserCell>
                  <Name>{row.name}</Name>
                  <Email>{row.email}</Email>
                  <Role>{row.role}</Role>
                </UserCell>
                <Badge $tone="red">Inactive</Badge>
                <Badge $tone={row.plan === "active" ? "purple" : "grey"}>{row.plan}</Badge>
                <BidsText>{row.bids}</BidsText>
                <DateText>{row.updated}</DateText>
                <EnableButton>Enable</EnableButton>
              </BodyRow>
            ))}
          </TableCard>
        </Main>
      </AppWindow>

      <WhatsappFab><FaWhatsapp size={52} /></WhatsappFab>

      <Dock>
        {dockIcons.map((icon) =>
          icon.draw === null ? (
            <DockSeparator key={icon.key} />
          ) : (
            <DockItem key={icon.key}>
              {icon.draw}
              {icon.badge && <DockBadge>{icon.badge}</DockBadge>}
              {icon.dot && <RunningDot />}
            </DockItem>
          ),
        )}
      </Dock>
    </Page>
  );
}

export default App;
